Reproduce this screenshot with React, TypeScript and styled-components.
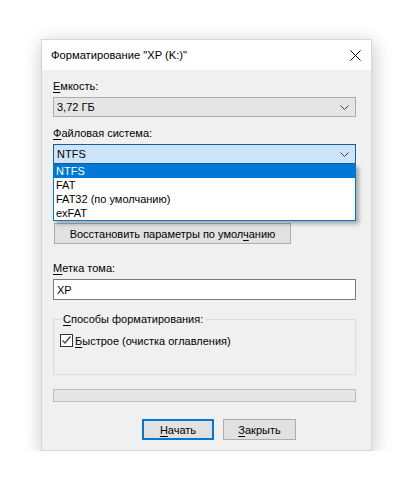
import React from 'react';
import styled, { createGlobalStyle } from 'styled-components';

const GlobalStyle = createGlobalStyle`
  html, body {
    margin: 0;
    padding: 0;
    background: #ffffff;
  }
  body {
    font-family: "Liberation Sans", Arial, sans-serif;
    font-size: 11px;
    color: #000;
  }
`;

const Page = styled.div`
  padding: 39px 0 0 41px;
`;

const Window = styled.div`
  width: 331px;
  height: 412px;
  box-sizing: border-box;
  display: flex;
  flex-direction: column;
  background: #f0f0f0;
  border: 1px solid #d6d6d6;
  box-shadow: 1px 4px 18px rgba(0, 0, 0, 0.24);
`;

const TitleBar = styled.div`
  height: 30px;
  display: flex;
  align-items: center;
  justify-content: space-between;
  padding: 0 6px 0 9px;
  background: #ffffff;
  font-size: 11.2px;
  white-space: nowrap;
`;

const CloseIcon = styled.svg`
  width: 11px;
  height: 11px;
  margin-right: 4px;
`;

const Body = styled.div`
  position: relative;
  padding: 9px 15px 0 11px;
  display: flex;
  flex-direction: column;
  white-space: nowrap;
`;

const Label = styled.div<{ $top?: number }>`
  line-height: 15px;
  margin-top: ${({ $top }) => $top ?? 0}px;
  margin-bottom: 3px;
  color: #000;
`;

const Key = styled.span`
  text-decoration: underline;
  text-underline-offset: 2px;
  text-decoration-thickness: 1px;
`;

const ComboWrap = styled.div`
  position: relative;
`;

const Combo = styled.div<{ $focused?: boolean }>`
  height: 20px;
  box-sizing: border-box;
  display: flex;
  align-items: center;
  justify-content: space-between;
  padding: 0 6px 0 3px;
  background: ${({ $focused }) => ($focused ? '#cce4f7' : '#e5e5e5')};
  border: 1px solid ${({ $focused }) => ($focused ? '#1a5c9e' : '#adadad')};
`;

const Chevron = () => (
  <svg width="9" height="5" viewBox="0 0 9 5">
    <path d="M0.5 0.5 L4.5 4.5 L8.5 0.5" fill="none" stroke="#404040" strokeWidth="1" />
  </svg>
);

const DropList = styled.div`
  position: absolute;
  left: 0;
  right: 0;
  top: 100%;
  z-index: 2;
  background: #fff;
  border: 1px solid #0078d7;
  border-top: none;
  box-shadow: 3px 3px 4px rgba(0, 0, 0, 0.3);
`;

const DropItem = styled.div<{ $active?: boolean }>`
  height: 14px;
  line-height: 14px;
  padding-left: 2px;
  background: ${({ $active }) => ($active ? '#0078d7' : 'transparent')};
  color: ${({ $active }) => ($active ? '#fff' : '#000')};
`;

const Button = styled.button<{ $width: number; $default?: boolean }>`
  width: ${({ $width }) => $width}px;
  height: 21px;
  box-sizing: border-box;
  padding: 0;
  font: inherit;
  white-space: nowrap;
  color: #000;
  background: #e1e1e1;
  border: ${({ $default }) => ($default ? '2px solid #0078d7' : '1px solid #adadad')};
`;

const RestoreRow = styled.div`
  margin-top: 59px;
  padding-left: 1px;
`;

const TextInput = styled.div`
  height: 21px;
  box-sizing: border-box;
  display: flex;
  align-items: center;
  padding-left: 3px;
  background: #fff;
  border: 1px solid #7a7a7a;
`;

const Group = styled.fieldset`
  margin: 12px 0 0 0;
  padding: 7px 6px 0 6px;
  height: 63px;
  box-sizing: border-box;
  border: 1px solid #dcdcdc;
  min-width: 0;
`;

const Legend = styled.legend`
  padding: 0 2px 0 1px;
  margin-left: 2px;
  line-height: 15px;
`;

const CheckRow = styled.div`
  display: flex;
  align-items: center;
  gap: 2px;
`;

const CheckBox = styled.div`
  width: 13px;
  height: 13px;
  box-sizing: border-box;
  border: 1px solid #333;
  background: #fff;
  display: flex;
  align-items: center;
  justify-content: center;
`;

const Progress = styled.div`
  margin-top: 14px;
  height: 13px;
  box-sizing: border-box;
  background: #e6e6e6;
  border: 1px solid #bcbcbc;
`;

const ButtonRow = styled.div`
  display: flex;
  gap: 9px;
  margin-top: 17px;
  padding-left: 89px;
`;

export default function App() {
  return (
    <>
      <GlobalStyle />
      <Page>
        <Window>
          <TitleBar>
            <span>Форматирование "XP (K:)"</span>
            <CloseIcon viewBox="0 0 11 11">
              <path d="M0.5 0.5 L10.5 10.5 M10.5 0.5 L0.5 10.5" stroke="#000" strokeWidth="1" />
            </CloseIcon>
          </TitleBar>
          <Body>
            <Label>
              <Key>Е</Key>мкость:
            </Label>
            <Combo>
              <span>3,72 ГБ</span>
              <Chevron />
            </Combo>

            <Label $top={9}>
              <Key>Ф</Key>айловая система:
            </Label>
            <ComboWrap>
              <Combo $focused>
                <span>NTFS</span>
                <Chevron />
              </Combo>
              <DropList>
                <DropItem $active>NTFS</DropItem>
                <DropItem>FAT</DropItem>
                <DropItem>FAT32 (по умолчанию)</DropItem>
                <DropItem>exFAT</DropItem>
              </DropList>
            </ComboWrap>

            <RestoreRow>
              <Button $width={237}>
                Восстановить параметры по умол<Key>ч</Key>анию
              </Button>
            </RestoreRow>

            <Label $top={17}>
              <Key>М</Key>етка тома:
            </Label>
            <TextInput>XP</TextInput>

            <Group>
              <Legend>
                <Key>С</Key>пособы форматирования:
              </Legend>
              <CheckRow>
                <CheckBox>
                  <svg width="11" height="11" viewBox="0 0 11 11">
                    <path d="M1.5 5.5 L4 8 L9.5 1.5" fill="none" stroke="#4a4a4a" strokeWidth="1.3" />
                  </svg>
                </CheckBox>
                <span>
                  <Key>Б</Key>ыстрое (очистка оглавления)
                </span>
              </CheckRow>
            </Group>

            <Progress />

            <ButtonRow>
              <Button $width={72} $default>
                <Key>Н</Key>ачать
              </Button>
              <Button $width={73}>
                <Key>З</Key>акрыть
              </Button>
            </ButtonRow>
          </Body>
        </Window>
      </Page>
    </>
  );
}
